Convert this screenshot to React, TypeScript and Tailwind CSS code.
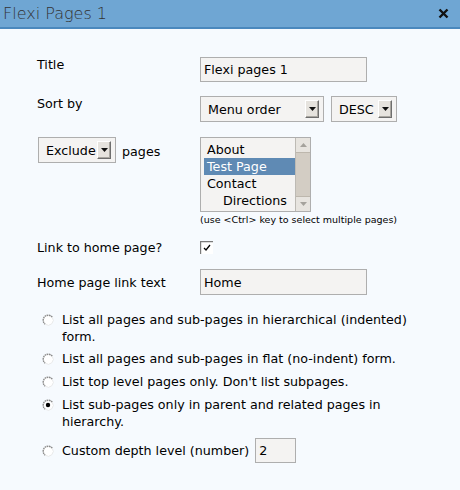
import React from "react";

const font = { fontFamily: '"DejaVu Sans", Verdana, sans-serif' };

function ArrowButton() {
  return (
    <div className="flex h-[18px] w-[14px] items-center justify-center border-t border-l border-t-white border-l-white border-r border-b border-r-[#6e6e6e] border-b-[#6e6e6e] bg-[#e6e3de] shadow-[inset_-1px_-1px_0_#a9a6a0]">
      <svg width="7" height="4" viewBox="0 0 7 4">
        <path d="M0 0h7L3.5 4z" fill="#111" />
      </svg>
    </div>
  );
}

function Select({ label, width, arrowGap = 4 }: { label: string; width: string; arrowGap?: number }) {
  return (
    <div className={`flex h-[26px] ${width} items-center justify-between border border-[#aeaeae] bg-[#f4f3f2] pl-[7px] text-black`}>
      <span>{label}</span>
      <div style={{ marginRight: arrowGap }}>
        <ArrowButton />
      </div>
    </div>
  );
}

function Radio({ checked = false }: { checked?: boolean }) {
  return (
    <svg width="12" height="12" viewBox="0 0 12 12" className="shrink-0">
      <circle cx="6" cy="6" r="5" fill="#ffffff" />
      <path d="M10.2 3.2A5 5 0 1 0 3.2 10.2" fill="none" stroke="#8a8a8a" strokeWidth="1.4" strokeDasharray="1.6 0.6" />
      <path d="M3.2 10.2A5 5 0 0 0 10.2 3.2" fill="none" stroke="#e9e9e9" strokeWidth="1" />
      {checked && <circle cx="6" cy="6" r="2.2" fill="#000" />}
    </svg>
  );
}

export default function App() {
  return (
    <div className="h-[490px] w-[460px] overflow-hidden bg-[#f6fafe] text-black" style={font}>
      <header className="flex h-[29px] items-center justify-between border-b-2 border-[#4a88bd] bg-[#6fa6d3] pl-[3px] pr-[11px]">
        <span className="text-[16px] font-extralight text-[#333]">Flexi Pages 1</span>
        <svg width="11" height="11" viewBox="0 0 11 11">
          <path d="M1.5 1.5l8 8M9.5 1.5l-8 8" stroke="#111" strokeWidth="2.4" />
        </svg>
      </header>

      <div className="pt-[28px] pl-[37px] text-[12.7px] leading-[17px]">
        <div className="flex">
          <div className="-mt-[1px] w-[163px]">Title</div>
          <div className="flex h-[25px] w-[167px] items-center border border-[#aeaeae] bg-[#f4f3f2] pl-[3px]">Flexi pages 1</div>
        </div>

        <div className="mt-[14px] flex">
          <div className="-mt-[1px] w-[163px]">Sort by</div>
          <Select label="Menu order" width="w-[124px]" />
          <div className="ml-[7px]">
            <Select label="DESC" width="w-[66px]" />
          </div>
        </div>

        <div className="mt-[15px] flex">
          <div className="flex w-[163px] items-start">
            <div className="ml-px">
              <Select label="Exclude" width="w-[78px]" />
            </div>
            <span className="ml-[6px] mt-[6px]">pages</span>
          </div>
          <div>
            <div className="flex h-[75px] w-[111px] border border-[#aeaeae] bg-[#f4f3f2]">
              <div className="flex-1 pl-[3px] pt-[3px] leading-[17px]">
                <div className="pl-[3px]">About</div>
                <div className="bg-[#5f8ab4] pl-[3px] text-white">Test Page</div>
                <div className="pl-[3px]">Contact</div>
                <div className="pl-[19px]">Directions</div>
              </div>
              <div className="flex w-[15px] flex-col border-l border-[#bdbab4] bg-[#e7e4df]">
                <div className="flex h-[14px] items-center justify-center">
                  <svg width="7" height="4" viewBox="0 0 7 4">
                    <path d="M0 4h7L3.5 0z" fill="#a5a29c" />
                  </svg>
                </div>
                <div className="flex-1 border-y border-[#bdb7ad] bg-[#d3cdc4]" />
                <div className="flex h-[14px] items-center justify-center">
                  <svg width="7" height="4" viewBox="0 0 7 4">
                    <path d="M0 0h7L3.5 4z" fill="#a5a29c" />
                  </svg>
                </div>
              </div>
            </div>
            <div className="mt-[2px] text-[9.5px] leading-[11px]">(use &lt;Ctrl&gt; key to select multiple pages)</div>
          </div>
        </div>

        <div className="mt-[14px] flex items-center">
          <div className="w-[163px]">Link to home page?</div>
          <svg width="13" height="13" viewBox="0 0 13 13">
            <rect x="0" y="0" width="13" height="13" fill="#fff" />
            <path d="M0.5 13V0.5H13" fill="none" stroke="#7a7a7a" strokeWidth="1.4" />
            <path d="M4 7l2 2 4-5" fill="none" stroke="#000" strokeWidth="1.3" />
          </svg>
        </div>

        <div className="mt-[13px] flex items-center">
          <div className="w-[163px]">Home page link text</div>
          <div className="flex h-[26px] w-[167px] items-center border border-[#aeaeae] bg-[#f4f3f2] pl-[3px]">Home</div>
        </div>

        <div className="mt-[16px] flex flex-col pl-[5px]">
          <div className="flex items-start">
            <div className="mt-[3px]"><Radio /></div>
            <span className="ml-[8px] w-[356px]">List all pages and sub-pages in hierarchical (indented) form.</span>
          </div>
          <div className="mt-[5px] flex items-start">
            <div className="mt-[3px]"><Radio /></div>
            <span className="ml-[8px]">List all pages and sub-pages in flat (no-indent) form.</span>
          </div>
          <div className="mt-[6px] flex items-start">
            <div className="mt-[3px]"><Radio /></div>
            <span className="ml-[8px]">List top level pages only. Don't list subpages.</span>
          </div>
          <div className="mt-[6px] flex items-start">
            <div className="mt-[3px]"><Radio checked /></div>
            <span className="ml-[8px] w-[356px]">List sub-pages only in parent and related pages in hierarchy.</span>
          </div>
          <div className="mt-[8px] flex items-center">
            <Radio />
            <span className="ml-[8px]">Custom depth level (number)</span>
            <div className="ml-[6px] flex h-[25px] w-[41px] items-center border border-[#aeaeae] bg-[#f4f3f2] pl-[3px]">2</div>
          </div>
        </div>
      </div>
    </div>
  );
}
